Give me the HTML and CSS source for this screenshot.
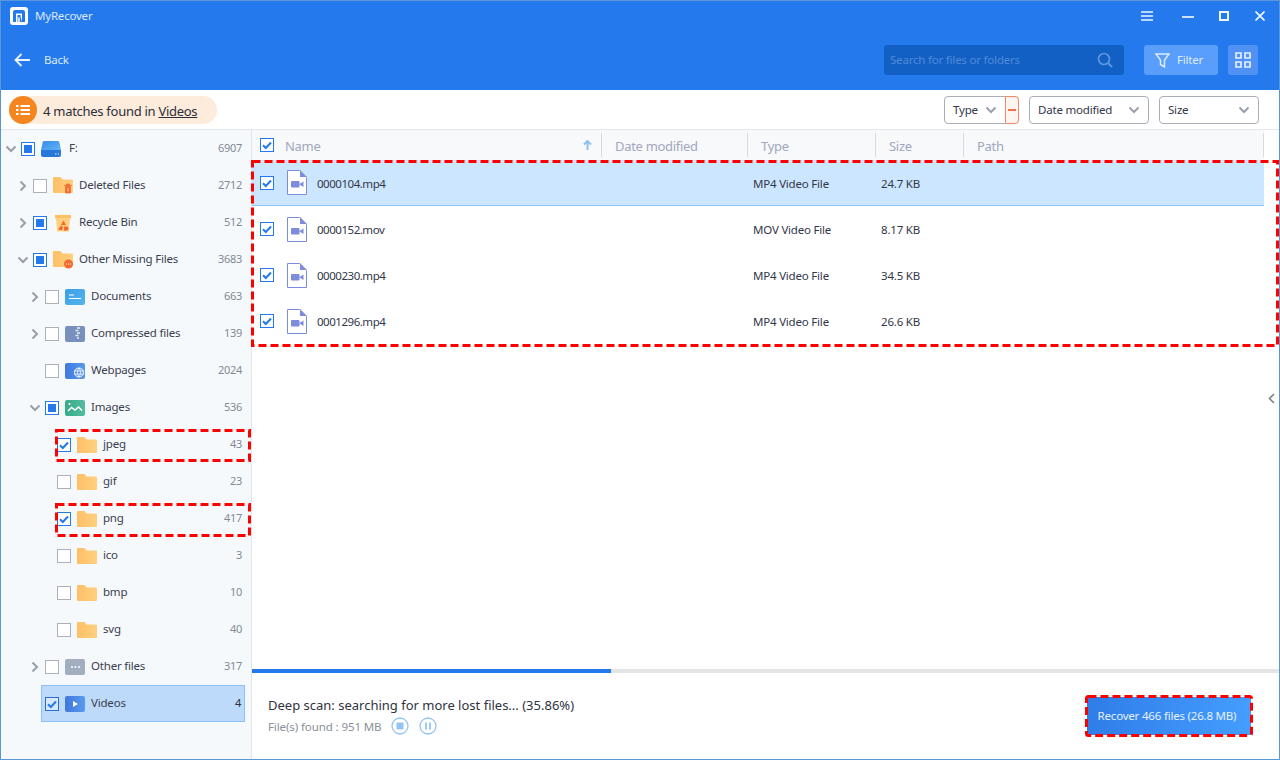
FILE: index.html
```html
<!DOCTYPE html>
<html lang="en">
<head>
    <meta charset="UTF-8">
    <meta name="viewport" content="width=device-width, initial-scale=1.0">
    <title>MyRecover</title>
    <link rel="stylesheet" href="styles.css">
</head>
<body>
    <svg class="sprite" width="0" height="0">
        <defs>
            <linearGradient id="gFolder" x1="0" y1="0" x2="1" y2="0"><stop offset="0" stop-color="#ffbf66"/><stop offset="1" stop-color="#ffd07f"/></linearGradient>
            <linearGradient id="gBlue" x1="0" y1="0" x2="1" y2="1"><stop offset="0" stop-color="#3b9fe6"/><stop offset="1" stop-color="#54b4ee"/></linearGradient>
            <linearGradient id="gDrive" x1="0" y1="0" x2="1" y2="1"><stop offset="0" stop-color="#3a8be8"/><stop offset="1" stop-color="#5fb3f4"/></linearGradient>
            <linearGradient id="gWeb" x1="0" y1="0" x2="1" y2="0"><stop offset="0" stop-color="#3f78de"/><stop offset="1" stop-color="#5a9aec"/></linearGradient>
            <linearGradient id="gGreen" x1="0" y1="0" x2="1" y2="0"><stop offset="0" stop-color="#38a98c"/><stop offset="1" stop-color="#55bd9f"/></linearGradient>
            <symbol id="folder" viewBox="0 0 20 16"><path d="M1 0h6.500l2 2.500H19a1 1 0 0 1 1 1V15a1 1 0 0 1-1 1H1a1 1 0 0 1-1-1V1a1 1 0 0 1 1-1z" fill="url(#gFolder)"/></symbol>
            <symbol id="check" viewBox="0 0 14 14"><path d="M3 7.200 5.800 10 11 4.500" fill="none" stroke="#2479ec" stroke-width="2"/></symbol>
            <symbol id="chev-right" viewBox="0 0 12 12"><path d="M3.500 1.500 8 6l-4.500 4.500" fill="none" stroke="#9a9ea8" stroke-width="2"/></symbol>
            <symbol id="chev-down" viewBox="0 0 12 12"><path d="M1.500 3.500 6 8l4.500-4.500" fill="none" stroke="#9a9ea8" stroke-width="2"/></symbol>
            <symbol id="file" viewBox="0 0 20 25"><path d="M.500.500h12l7 7v17H.500z" fill="#fff" stroke="#7d8cdb"/><path d="M13 0l7 7h-7z" fill="#7d8cdb"/><rect x="4" y="11" width="8.500" height="6.500" rx="1" fill="#7d8cdb"/><path d="M12.500 14l4-2.500v5.500l-4-2.500z" fill="#7d8cdb"/></symbol>
            <symbol id="dropdown" viewBox="0 0 12 8"><path d="M1.500 1.500 6 6l4.500-4.500" fill="none" stroke="#9aa0ab" stroke-width="2"/></symbol>
        </defs>
    </svg>

    <div class="window">
        <header class="topbar">
            <div class="title-row">
                <svg class="logo" width="18" height="18" viewBox="0 0 18 18"><rect width="18" height="18" rx="3" fill="#fff"/><path d="M3 5a2 2 0 0 1 2-2h8a2 2 0 0 1 2 2v10h-3V6.500H6V15H3z" fill="#2479ec"/><path d="M7.500 8h3v1.500L12 15H7.500z" fill="#2479ec"/><path d="M9 15v-4.500" stroke="#fff" stroke-width="1.500"/></svg>
                <span class="app-name">MyRecover</span>
                <div class="win-buttons">
                    <svg class="win-menu" width="12" height="10" viewBox="0 0 12 10"><path d="M0 1h12M0 5h12M0 9h12" stroke="#eef5ff" stroke-width="1.700"/></svg>
                    <svg class="win-min" width="12" height="10" viewBox="0 0 12 10"><path d="M0 6h12" stroke="#eef5ff" stroke-width="1.700"/></svg>
                    <svg class="win-max" width="10" height="10" viewBox="0 0 10 10"><rect x="1" y="1" width="8" height="8" fill="none" stroke="#eef5ff" stroke-width="2"/></svg>
                    <svg class="win-close" width="10" height="10" viewBox="0 0 10 10"><path d="M.500.500l9 9M9.500.500l-9 9" stroke="#eef5ff" stroke-width="1.700"/></svg>
                </div>
            </div>
            <div class="nav-row">
                <svg class="back-arrow" width="16" height="14" viewBox="0 0 16 14"><path d="M16 7H2M7.500 1 1.500 7l6 6" fill="none" stroke="#eaf3ff" stroke-width="1.800"/></svg>
                <span class="back-label">Back</span>
                <div class="search">
                    <span>Search for files or folders</span>
                    <svg width="16" height="16" viewBox="0 0 16 16"><circle cx="7" cy="7" r="5.500" fill="none" stroke="#5f97df" stroke-width="1.700"/><path d="M11 11l4 4" stroke="#5f97df" stroke-width="1.900"/></svg>
                </div>
                <button class="filter-btn">
                    <svg width="15" height="15" viewBox="0 0 15 15"><path d="M1 1h13L9.500 7v7l-4-2.500V7z" fill="none" stroke="#dcebff" stroke-width="1.500"/></svg>
                    <span>Filter</span>
                </button>
                <button class="view-btn">
                    <svg width="16" height="16" viewBox="0 0 16 16"><path d="M1 1h5v5H1zM10 1h5v5h-5zM1 10h5v5H1zM10 10h5v5h-5z" fill="none" stroke="#e4efff" stroke-width="1.700"/></svg>
                </button>
            </div>
        </header>

        <div class="toolbar">
            <div class="matches">
                <span class="matches-icon">
                    <svg width="14" height="10" viewBox="0 0 14 10"><path d="M0 1h2.500M4.500 1H14M0 5h2.500M4.500 5H14M0 9h2.500M4.500 9H14" stroke="#fff" stroke-width="2"/></svg>
                </span>
                <span class="matches-text">4 matches found in <u>Videos</u></span>
            </div>
            <div class="sorters">
                <div class="sorter sorter-type">
                    <span>Type</span>
                    <svg width="12" height="8"><use href="#dropdown"/></svg>
                    <span class="sorter-minus"></span>
                </div>
                <div class="sorter sorter-date"><span>Date modified</span><svg width="12" height="8"><use href="#dropdown"/></svg></div>
                <div class="sorter sorter-size"><span>Size</span><svg width="12" height="8"><use href="#dropdown"/></svg></div>
            </div>
        </div>

        <div class="body">
            <aside class="sidebar">
                <div class="tree-row">
                    <svg class="chev" width="12" height="12"><use href="#chev-down"/></svg>
                    <span class="cb partial"></span>
                    <svg class="ico" width="20" height="18" viewBox="0 0 20 18"><path d="M3.500 1h13a2 2 0 0 1 1.800 1.300L20 10H0l1.700-7.700A2 2 0 0 1 3.500 1z" fill="url(#gDrive)"/><path d="M0 10h20v5a2 2 0 0 1-2 2H2a2 2 0 0 1-2-2z" fill="#2877da"/><path d="M14 14h1.500M17 14h1" stroke="#fff" stroke-width="1.200"/></svg>
                    <span class="name drive-name">F:</span>
                    <span class="count">6907</span>
                </div>
                <div class="tree-row lvl1">
                    <svg class="chev" width="12" height="12"><use href="#chev-right"/></svg>
                    <span class="cb"></span>
                    <svg class="ico" width="20" height="17" viewBox="0 0 20 17"><use href="#folder" width="20" height="16"/><path d="M11 8.500h8M13.500 8.500V7h3v1.500M12.500 9.500h5V16h-5z" fill="#f56a2e" stroke="#f56a2e" stroke-width=".8"/><path d="M15 11v3.500" stroke="#ffd9a0" stroke-width="1"/></svg>
                    <span class="name">Deleted Files</span>
                    <span class="count">2712</span>
                </div>
                <div class="tree-row lvl1">
                    <svg class="chev" width="12" height="12"><use href="#chev-right"/></svg>
                    <span class="cb partial"></span>
                    <svg class="ico" width="20" height="18" viewBox="0 0 20 18"><path d="M2 1h16v3.500H2z" fill="#ffc063"/><path d="M3 4.500h14L15.800 17.500H4.200z" fill="#ffcf7d"/><path d="M10.500 6.500 13 11H8zM5.500 15l2.500-3.500 2 1.500-1 3H6zM11 12.500h3.500l1 2-1 2h-3.500z" fill="#f5682c"/></svg>
                    <span class="name">Recycle Bin</span>
                    <span class="count">512</span>
                </div>
                <div class="tree-row lvl1">
                    <svg class="chev" width="12" height="12"><use href="#chev-down"/></svg>
                    <span class="cb partial"></span>
                    <svg class="ico" width="20" height="18" viewBox="0 0 20 18"><use href="#folder" width="20" height="16"/><circle cx="15.500" cy="13" r="4.500" fill="#f56a2e"/><path d="M13 13h1M15 13h1M17 13h1" stroke="#fff" stroke-width="1.200"/></svg>
                    <span class="name">Other Missing Files</span>
                    <span class="count">3683</span>
                </div>
                <div class="tree-row lvl2">
                    <svg class="chev" width="12" height="12"><use href="#chev-right"/></svg>
                    <span class="cb"></span>
                    <svg class="ico" width="20" height="16" viewBox="0 0 20 16"><rect width="20" height="16" rx="2" fill="url(#gBlue)"/><path d="M4 6h5M4 9.500h12" stroke="#fff" stroke-width="1.200"/></svg>
                    <span class="name">Documents</span>
                    <span class="count">663</span>
                </div>
                <div class="tree-row lvl2">
                    <svg class="chev" width="12" height="12"><use href="#chev-right"/></svg>
                    <span class="cb"></span>
                    <svg class="ico" width="20" height="16" viewBox="0 0 20 16"><rect width="20" height="16" rx="2" fill="#7790bd"/><path d="M12 2h3M10.500 4.500h3M12 7h3M10.500 9.500h3M12 12h2" stroke="#e6ecf6" stroke-width="1.300"/></svg>
                    <span class="name">Compressed files</span>
                    <span class="count">139</span>
                </div>
                <div class="tree-row lvl2">
                    <span class="chev"></span>
                    <span class="cb"></span>
                    <svg class="ico" width="20" height="16" viewBox="0 0 20 16"><rect width="20" height="16" rx="2" fill="url(#gWeb)"/><circle cx="14" cy="9.500" r="4.500" fill="none" stroke="#fff"/><path d="M9.500 8h9M9.500 11h9M14 5c-2 2.800-2 6.200 0 9M14 5c2 2.800 2 6.200 0 9" fill="none" stroke="#fff" stroke-width=".8"/></svg>
                    <span class="name">Webpages</span>
                    <span class="count">2024</span>
                </div>
                <div class="tree-row lvl2">
                    <svg class="chev" width="12" height="12"><use href="#chev-down"/></svg>
                    <span class="cb partial"></span>
                    <svg class="ico" width="20" height="16" viewBox="0 0 20 16"><rect width="20" height="16" rx="2" fill="url(#gGreen)"/><circle cx="4.500" cy="4" r="1" fill="#fff"/><path d="M3 11l3.500-3.500L10 10l3.500-3 3.500 3.500" fill="none" stroke="#fff" stroke-width="1.400"/></svg>
                    <span class="name">Images</span>
                    <span class="count">536</span>
                </div>
                <div class="tree-row lvl3">
                    <span class="cb checked"><svg width="14" height="14"><use href="#check"/></svg></span>
                    <svg class="ico" width="20" height="16"><use href="#folder"/></svg>
                    <span class="name">jpeg</span>
                    <span class="count">43</span>
                    <svg class="dash dash-tree" width="196" height="33" viewBox="0 0 196 33"><rect x="1.500" y="1.500" width="193" height="30"/></svg>
                </div>
                <div class="tree-row lvl3">
                    <span class="cb"></span>
                    <svg class="ico" width="20" height="16"><use href="#folder"/></svg>
                    <span class="name">gif</span>
                    <span class="count">23</span>
                </div>
                <div class="tree-row lvl3">
                    <span class="cb checked"><svg width="14" height="14"><use href="#check"/></svg></span>
                    <svg class="ico" width="20" height="16"><use href="#folder"/></svg>
                    <span class="name">png</span>
                    <span class="count">417</span>
                    <svg class="dash dash-tree" width="196" height="34" viewBox="0 0 196 34"><rect x="1.500" y="1.500" width="193" height="31"/></svg>
                </div>
                <div class="tree-row lvl3">
                    <span class="cb"></span>
                    <svg class="ico" width="20" height="16"><use href="#folder"/></svg>
                    <span class="name">ico</span>
                    <span class="count">3</span>
                </div>
                <div class="tree-row lvl3">
                    <span class="cb"></span>
                    <svg class="ico" width="20" height="16"><use href="#folder"/></svg>
                    <span class="name">bmp</span>
                    <span class="count">10</span>
                </div>
                <div class="tree-row lvl3">
                    <span class="cb"></span>
                    <svg class="ico" width="20" height="16"><use href="#folder"/></svg>
                    <span class="name">svg</span>
                    <span class="count">40</span>
                </div>
                <div class="tree-row lvl2">
                    <svg class="chev" width="12" height="12"><use href="#chev-right"/></svg>
                    <span class="cb"></span>
                    <svg class="ico" width="20" height="16" viewBox="0 0 20 16"><rect width="20" height="16" rx="2" fill="#a3adc0"/><path d="M6 8h2M9.500 8h2M13 8h2" stroke="#fff" stroke-width="1.300"/></svg>
                    <span class="name">Other files</span>
                    <span class="count">317</span>
                </div>
                <div class="tree-row selected">
                    <span class="cb checked"><svg width="14" height="14"><use href="#check"/></svg></span>
                    <svg class="ico" width="20" height="16" viewBox="0 0 20 16"><rect width="20" height="16" rx="2" fill="url(#gWeb)"/><path d="M8 5l5 3-5 3z" fill="#fff"/></svg>
                    <span class="name">Videos</span>
                    <span class="count">4</span>
                </div>
            </aside>

            <main class="main">
                <div class="table">
                    <div class="table-head">
                        <div class="th th-name">
                            <span class="cb checked"><svg width="14" height="14"><use href="#check"/></svg></span>
                            <span class="th-label">Name</span>
                            <svg class="sort-arrow" width="9" height="10" viewBox="0 0 9 10"><path d="M4.500 10V2M1 4.500 4.500 1 8 4.500" fill="none" stroke="#8fc0f0" stroke-width="2"/></svg>
                        </div>
                        <div class="th">Date modified</div>
                        <div class="th">Type</div>
                        <div class="th">Size</div>
                        <div class="th th-path">Path</div>
                    </div>
                    <div class="rows">
                        <div class="file-row active">
                            <div class="td-name">
                                <span class="cb checked"><svg width="14" height="14"><use href="#check"/></svg></span>
                                <svg class="file-ico" width="20" height="25"><use href="#file"/></svg>
                                <span class="file-name">0000104.mp4</span>
                            </div>
                            <div></div>
                            <div class="td">MP4 Video File</div>
                            <div class="td">24.7 KB</div>
                            <div></div>
                        </div>
                        <div class="file-row">
                            <div class="td-name">
                                <span class="cb checked"><svg width="14" height="14"><use href="#check"/></svg></span>
                                <svg class="file-ico" width="20" height="25"><use href="#file"/></svg>
                                <span class="file-name">0000152.mov</span>
                            </div>
                            <div></div>
                            <div class="td">MOV Video File</div>
                            <div class="td">8.17 KB</div>
                            <div></div>
                        </div>
                        <div class="file-row">
                            <div class="td-name">
                                <span class="cb checked"><svg width="14" height="14"><use href="#check"/></svg></span>
                                <svg class="file-ico" width="20" height="25"><use href="#file"/></svg>
                                <span class="file-name">0000230.mp4</span>
                            </div>
                            <div></div>
                            <div class="td">MP4 Video File</div>
                            <div class="td">34.5 KB</div>
                            <div></div>
                        </div>
                        <div class="file-row">
                            <div class="td-name">
                                <span class="cb checked"><svg width="14" height="14"><use href="#check"/></svg></span>
                                <svg class="file-ico" width="20" height="25"><use href="#file"/></svg>
                                <span class="file-name">0001296.mp4</span>
                            </div>
                            <div></div>
                            <div class="td">MP4 Video File</div>
                            <div class="td">26.6 KB</div>
                            <div></div>
                        </div>
                        <svg class="dash dash-rows" width="1028" height="187" viewBox="0 0 1028 187"><rect x="1.500" y="1.500" width="1025" height="184"/></svg>
                    </div>
                    <svg class="collapse" width="7" height="11" viewBox="0 0 7 11"><path d="M6 1 1.500 5.500 6 10" fill="none" stroke="#7c8494" stroke-width="1.600"/></svg>
                </div>

                <div class="progress"><div class="progress-fill"></div></div>
                <footer class="footer">
                    <div class="scan">
                        <div class="scan-title">Deep scan: searching for more lost files... (35.86%)</div>
                        <div class="scan-info">
                            <span>File(s) found : 951 MB</span>
                            <svg width="18" height="18" viewBox="0 0 18 18"><circle cx="9" cy="9" r="8" fill="none" stroke="#94c3f8" stroke-width="1.300"/><rect x="5.500" y="5.500" width="7" height="7" rx="1" fill="#94c3f8"/></svg>
                            <svg width="18" height="18" viewBox="0 0 18 18"><circle cx="9" cy="9" r="8" fill="none" stroke="#94c3f8" stroke-width="1.300"/><path d="M7 5.500v7M11 5.500v7" stroke="#94c3f8" stroke-width="1.800"/></svg>
                        </div>
                    </div>
                    <button class="recover">
                        Recover 466 files (26.8 MB)
                        <svg class="dash dash-recover" width="168" height="42" viewBox="0 0 168 42"><rect x="1.500" y="1.500" width="165" height="39" rx="2"/></svg>
                    </button>
                </footer>
            </main>
        </div>
    </div>
</body>
</html>
```

FILE: styles.css
```css
* {
    box-sizing: border-box;
}

body {
    margin: 0;
    font-family: "Noto Sans", "Open Sans", sans-serif;
    font-size: 11.5px;
    letter-spacing: -0.2px;
    color: #3a3e4e;
}

.sprite {
    display: block;
}

.window {
    display: flex;
    flex-direction: column;
    width: 1280px;
    height: 760px;
    border: 1px solid #5b97d6;
    background-color: #fff;
}

/* top blue area */
.topbar {
    height: 89px;
    background-color: #2479ec;
    color: #dbe9fc;
}

.title-row {
    display: flex;
    align-items: center;
    height: 29px;
    padding-left: 9px;
}

.logo {
    margin-top: 1px;
}

.app-name {
    margin-left: 7px;
}

.win-buttons {
    display: flex;
    align-items: center;
    margin-left: auto;
    padding-right: 14px;
}

.win-menu {
    margin-right: 29px;
}

.win-min {
    margin-right: 25px;
}

.win-max {
    margin-right: 26px;
}

.nav-row {
    display: flex;
    align-items: center;
    height: 60px;
    padding-left: 13px;
}

.back-label {
    margin: 0 0 2px 14px;
}

.search {
    display: flex;
    align-items: center;
    justify-content: space-between;
    width: 240px;
    height: 30px;
    margin-left: auto;
    padding: 0 11px 0 6px;
    border-radius: 3px;
    background-color: #1360c5;
    color: #4f8ad8;
}

.search span,
.filter-btn span {
    margin-bottom: 2px;
}

.filter-btn {
    display: flex;
    align-items: center;
    gap: 7px;
    width: 74px;
    height: 30px;
    margin-left: 20px;
    padding: 0 0 0 11px;
    border: 0;
    border-radius: 3px;
    background-color: #5a9efc;
    color: #dcebff;
    font: inherit;
    letter-spacing: inherit;
}

.view-btn {
    display: flex;
    align-items: center;
    justify-content: center;
    width: 30px;
    height: 30px;
    margin: 0 21px 0 10px;
    padding: 0;
    border: 0;
    border-radius: 3px;
    background-color: #4f92f3;
}

/* matches + sort row */
.toolbar {
    display: flex;
    align-items: center;
    justify-content: space-between;
    height: 40px;
    padding: 0 20px 0 8px;
    border-bottom: 1px solid #e3e6ec;
}

.matches {
    display: flex;
    align-items: center;
    width: 208px;
    height: 28px;
    border-radius: 14px;
    background-color: #fdebdc;
}

.matches-icon {
    display: flex;
    align-items: center;
    justify-content: center;
    width: 28px;
    height: 28px;
    border-radius: 50%;
    background-color: #f5851f;
}

.matches-text {
    margin: 2px 0 0 6px;
    font-size: 13px;
    letter-spacing: -0.28px;
    color: #2c2f3a;
}

.sorters {
    display: flex;
    gap: 10px;
}

.sorter {
    display: flex;
    align-items: center;
    justify-content: space-between;
    height: 28px;
    padding: 0 8px;
    border: 1px solid #a9aebb;
    border-radius: 4px;
    color: #33374a;
}

.sorter-type {
    width: 75px;
    padding-right: 0;
}

.sorter-date {
    width: 120px;
}

.sorter-size {
    width: 100px;
}

.sorter-minus {
    display: flex;
    align-items: center;
    justify-content: center;
    width: 14px;
    height: 28px;
    margin-right: -1px;
    border: 1px solid #f58a63;
    border-radius: 0 4px 4px 0;
    background-color: #fff5f0;
}

.sorter-minus::after {
    content: "";
    width: 8px;
    height: 2px;
    background-color: #f2704a;
}

.body {
    display: flex;
    flex: 1;
    min-height: 0;
}

/* left tree */
.sidebar {
    width: 251px;
    border-right: 1px solid #e1e6ec;
    background-color: #f5f9fc;
}

.tree-row {
    position: relative;
    display: flex;
    align-items: center;
    height: 37px;
    padding: 0 9px 0 4px;
}

.lvl1 {
    padding-left: 16px;
}

.lvl2 {
    padding-left: 28px;
}

.lvl3 {
    padding-left: 56px;
}

.chev {
    flex: none;
    width: 12px;
    height: 12px;
    margin-right: 4px;
}

.cb {
    display: flex;
    flex: none;
    width: 14px;
    height: 14px;
    border: 1px solid #adb0b8;
    background-color: #fff;
}

.cb svg {
    flex: none;
    margin: -1px;
}

.cb.partial {
    align-items: center;
    justify-content: center;
    border-color: #2479ec;
}

.cb.partial::after {
    content: "";
    width: 8px;
    height: 8px;
    background-color: #2479ec;
}

.cb.checked {
    border-color: #2479ec;
}

.ico {
    flex: none;
    margin-left: 6px;
}

.name {
    margin: 0 0 2px 6px;
    white-space: nowrap;
}

.drive-name {
    margin-left: 8px;
}

.count {
    margin: 0 0 2px auto;
    font-size: 11px;
    letter-spacing: -0.3px;
    color: #858994;
}

.selected {
    height: 37px;
    margin: 0 6px 0 40px;
    padding: 0 3px;
    border: 1px solid #8cc0f8;
    background-color: #bddafa;
}

.selected .count {
    color: #2c2f3a;
}

.selected .cb {
    border-color: #2a6fd0;
    background-color: #d7e8fc;
}

/* red marks laid over the content */
.dash {
    position: absolute;
    z-index: 2;
    pointer-events: none;
}

.dash rect {
    fill: none;
    stroke: #f00;
    stroke-width: 3;
    stroke-dasharray: 8 4;
}

.dash-tree {
    top: 3px;
    left: 54px;
}

.dash-rows {
    top: 0;
    left: -1px;
}

.dash-recover {
    top: -2px;
    left: -2px;
}

/* file list */
.main {
    display: flex;
    flex: 1;
    flex-direction: column;
    min-width: 0;
}

.table {
    position: relative;
    flex: 1;
}

.collapse {
    position: absolute;
    top: 263px;
    right: 4px;
}

.table-head,
.file-row {
    display: grid;
    grid-template-columns: 349px 146px 128px 88px 301px;
    width: 1012px;
}

.table-head {
    align-items: center;
    height: 30px;
    background-color: #f8f9fa;
}

.th {
    display: flex;
    align-items: center;
    height: 24px;
    padding: 2px 0 0 13px;
    border-left: 1px solid #d8dbe2;
    font-size: 13px;
    letter-spacing: -0.3px;
    color: #a0a7be;
}

.th-name {
    padding: 0 9px 0 8px;
    border-left: 0;
}

.th-label {
    margin: 2px 0 0 11px;
}

.sort-arrow {
    margin-left: auto;
}

.th-path {
    border-right: 1px solid #d8dbe2;
}

.rows {
    position: relative;
}

.file-row {
    align-items: center;
    height: 46px;
    color: #33374a;
}

.file-row.active {
    border-bottom: 1px solid #8cc4f8;
    background-color: #cce6ff;
}

.file-row.active .td,
.file-row.active .file-name {
    margin-top: 2px;
}

.td-name {
    display: flex;
    align-items: center;
    padding-left: 8px;
}

.file-name {
    letter-spacing: -0.47px;
}

.file-ico {
    margin: 0 10px 0 13px;
}

.td {
    padding-left: 6px;
}

.progress {
    height: 4px;
    background-color: #e5e5e5;
}

.progress-fill {
    width: 359px;
    height: 100%;
    background-color: #2479ec;
}

.footer {
    display: flex;
    align-items: center;
    justify-content: space-between;
    height: 86px;
    padding: 0 28px 0 16px;
}

.scan {
    margin-bottom: 2px;
}

.scan-title {
    font-size: 13px;
    letter-spacing: 0;
    color: #2f3342;
}

.scan-info {
    display: flex;
    align-items: center;
    gap: 10px;
    margin-top: 3px;
    letter-spacing: -0.1px;
    color: #8a8f9a;
}

.scan-info span {
    margin-top: 2px;
}

.recover {
    position: relative;
    width: 164px;
    height: 38px;
    padding: 0 4px 2px 0;
    border: 0;
    background: linear-gradient(90deg, #2f7de8, #459dff);
    color: #e5f1ff;
    font: inherit;
    letter-spacing: inherit;
}
```
